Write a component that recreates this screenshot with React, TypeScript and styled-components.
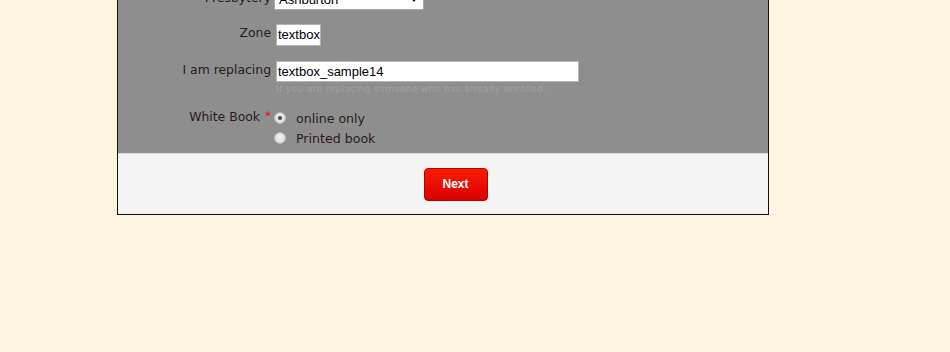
import React from "react";
import styled, { createGlobalStyle } from "styled-components";

const Global = createGlobalStyle`
  html, body { margin: 0; padding: 0; background: #fdf5df; }
  body { font-family: "DejaVu Sans", Verdana, sans-serif; overflow: hidden; }
`;

const Card = styled.div`
  width: 650px;
  margin: -24px 0 0 117px;
  border: 1px solid #111;
  border-top: none;
  background: #8e8e8e;
`;

const Body = styled.div`
  padding: 13px 0 5px 0;
  border-bottom: 1px solid #d8d8d8;
`;

const Row = styled.div<{ $gap?: number }>`
  display: grid;
  grid-template-columns: 153px 1fr;
  column-gap: 5px;
  margin-bottom: ${(p) => p.$gap ?? 0}px;
`;

const Label = styled.div`
  text-align: right;
  font-size: 12.4px;
  line-height: 18px;
  color: #2a1c1c;
  padding-top: 0px;
`;

const Req = styled.span`
  color: #e81010;
  font-size: 12px;
  margin-left: 5px;
  vertical-align: top;
  position: relative;
  top: -1px;
`;

const Field = styled.div`
  display: flex;
  flex-direction: column;
`;

const FakeSelect = styled.div`
  box-sizing: border-box;
  width: 150px;
  height: 21px;
  margin-left: -2px;
  background: #fff;
  border: 1px solid #a9a9a9;
  display: flex;
  align-items: center;
  justify-content: space-between;
  padding: 0 6px 0 4px;
  font-family: "Liberation Sans", Arial, sans-serif;
  font-size: 13px;
  color: #000;
`;

const Caret = styled.span`
  width: 0;
  height: 0;
  border-left: 3.5px solid transparent;
  border-right: 3.5px solid transparent;
  border-top: 4px solid #000;
`;

const TextBox = styled.div<{ $w: number; $h: number }>`
  box-sizing: border-box;
  width: ${(p) => p.$w}px;
  height: ${(p) => p.$h}px;
  background: #fff;
  border: 1px solid #b4b4b4;
  padding: 0 0 0 1px;
  font-family: "Liberation Sans", Arial, sans-serif;
  font-size: 13px;
  line-height: ${(p) => p.$h - 2}px;
  color: #000;
  overflow: hidden;
  white-space: nowrap;
`;

const Hint = styled.div`
  font-size: 9px;
  line-height: 15px;
  height: 15px;
  color: #a0a0a0;
  letter-spacing: 0.38px;
  white-space: nowrap;
`;

const Option = styled.div`
  display: flex;
  align-items: center;
  height: 20px;
  margin-left: -2px;
`;

const Radio = styled.span<{ $checked?: boolean }>`
  box-sizing: border-box;
  width: 12px;
  height: 12px;
  border-radius: 50%;
  background: radial-gradient(circle at 50% 40%, #f2f2f2 0%, #dedede 70%, #cfcfcf 100%);
  border: 1px solid #b8b8b8;
  display: flex;
  align-items: center;
  justify-content: center;
  margin-right: 10px;
  &::after {
    content: "";
    width: 4px;
    height: 4px;
    border-radius: 50%;
    background: ${(p) => (p.$checked ? "#4a4a4a" : "transparent")};
  }
`;

const OptionText = styled.span`
  font-size: 12.6px;
  color: #2a1c1c;
`;

const Footer = styled.div`
  height: 60px;
  background: #f4f4f4;
  display: flex;
  align-items: center;
  justify-content: center;
  padding-left: 25px;
`;

const NextButton = styled.button`
  box-sizing: border-box;
  width: 64px;
  height: 33px;
  border: 1px solid #b80000;
  border-radius: 4px;
  background: linear-gradient(#fa1c00, #d80000);
  color: #fff;
  font-family: "Liberation Sans", Arial, sans-serif;
  font-weight: bold;
  font-size: 12px;
  cursor: pointer;
  padding: 0;
`;

export default function App() {
  return (
    <>
      <Global />
      <Card>
        <Body>
          <Row $gap={14}>
            <Label>Presbytery</Label>
            <Field>
              <FakeSelect>
                <span>Ashburton</span>
                <Caret />
              </FakeSelect>
            </Field>
          </Row>
          <Row $gap={15}>
            <Label>Zone</Label>
            <Field>
              <TextBox $w={45} $h={22}>textbox_sample13</TextBox>
            </Field>
          </Row>
          <Row $gap={11}>
            <Label>I am replacing</Label>
            <Field>
              <TextBox $w={303} $h={21}>textbox_sample14</TextBox>
              <Hint>If you are replacing someone who has already enrolled.</Hint>
            </Field>
          </Row>
          <Row>
            <Label>
              White Book<Req>*</Req>
            </Label>
            <Field>
              <Option>
                <Radio $checked />
                <OptionText>online only</OptionText>
              </Option>
              <Option>
                <Radio />
                <OptionText>Printed book</OptionText>
              </Option>
            </Field>
          </Row>
        </Body>
        <Footer>
          <NextButton>Next</NextButton>
        </Footer>
      </Card>
    </>
  );
}
